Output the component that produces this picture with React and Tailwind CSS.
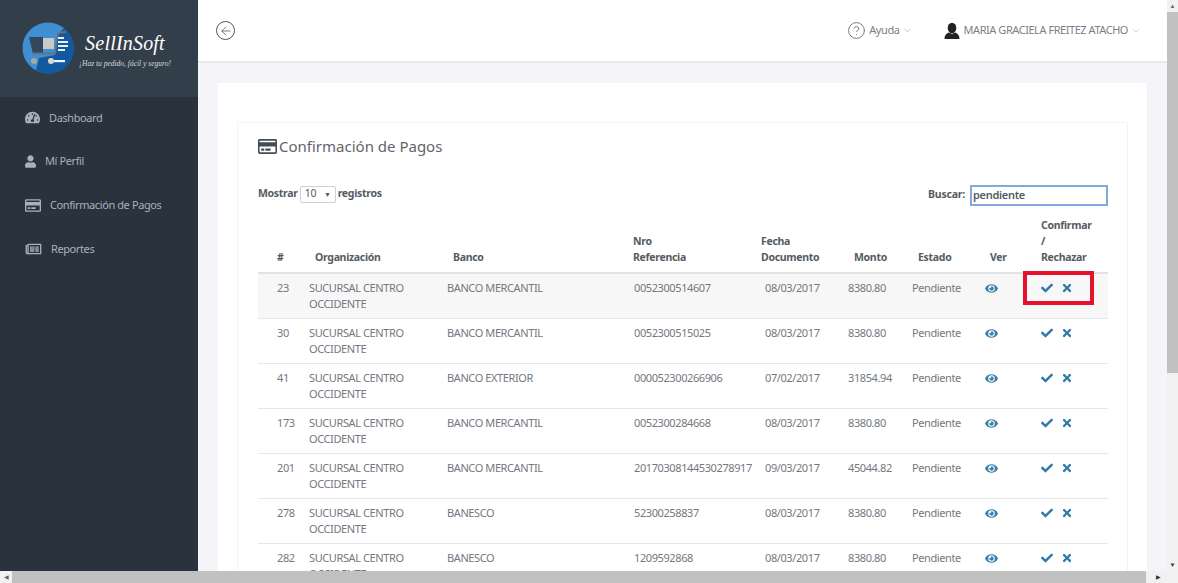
import React from "react";
import { FaTachometerAlt, FaUser, FaRegCreditCard, FaRegNewspaper, FaEye, FaCheck, FaTimes } from "react-icons/fa";
import { ArrowLeft, ChevronDown, HelpCircle } from "lucide-react";

const rows = [
  ["23", "BANCO MERCANTIL", "0052300514607", "08/03/2017", "8380.80"],
  ["30", "BANCO MERCANTIL", "0052300515025", "08/03/2017", "8380.80"],
  ["41", "BANCO EXTERIOR", "000052300266906", "07/02/2017", "31854.94"],
  ["173", "BANCO MERCANTIL", "0052300284668", "08/03/2017", "8380.80"],
  ["201", "BANCO MERCANTIL", "20170308144530278917", "09/03/2017", "45044.82"],
  ["278", "BANESCO", "52300258837", "08/03/2017", "8380.80"],
  ["282", "BANESCO", "1209592868", "08/03/2017", "8380.80"],
];

function Logo() {
  return (
    <svg width="52" height="52" viewBox="0 0 52 52" className="shrink-0">
      <circle cx="26" cy="26" r="25.5" fill="#3f8fd2" />
      <path d="M42 6A25.5 25.5 0 0 1 14 48.500L17 36L33 33L36 12Z" fill="#14589f" />
      <path d="M7 15H21V32H11Z" fill="#33475e" />
      <rect x="21" y="16" width="11" height="11" fill="#c9c9c9" />
      <path d="M11 31.500H33L36 12C37 10 40 10 44 10" fill="none" stroke="#64717f" strokeWidth="1.800" />
      <path d="M36 16H42M36 20H46M36 24H46M36 28H43" stroke="#e8f1f8" strokeWidth="1.800" />
      <circle cx="12" cy="39" r="3" fill="#a8a8a0" />
      <circle cx="29" cy="39" r="3" fill="#d8d8d0" />
      <rect x="32" y="38" width="11" height="2.200" fill="#eef4f9" />
    </svg>
  );
}

function Nav({ icon, label, className }) {
  return (
    <div className="flex items-center h-[43.7px] pl-[25px] text-[11px] tracking-[-0.4px] text-[#a9b1bc]">
      {icon}
      <span className={className}>{label}</span>
    </div>
  );
}

export default function App() {
  return (
    <div className="flex flex-col h-[583px] w-[1178px] overflow-hidden bg-[#f4f4f9] text-[#73787f] font-['Noto_Sans',sans-serif]">
      <div className="flex flex-1 min-h-0">
        <aside className="w-[198px] shrink-0 bg-[#2a323e]">
          <div className="h-[97px] bg-[#333e4b] flex items-center pl-[22px] pb-[1px]">
            <Logo />
            <div className="ml-[3px] w-[96px] text-center text-white font-['Liberation_Serif',serif] italic pt-[4px]">
              <div className="text-[20px] leading-[22px] tracking-[0.2px]">SellInSoft</div>
              <div className="text-[7.5px] leading-[10px] whitespace-nowrap mt-[5px] text-[#d5d9de]">¡Haz tu pedido, fácil y seguro!</div>
            </div>
          </div>
          <nav className="mt-[-1px]">
            <Nav icon={<FaTachometerAlt className="w-[15px] h-[15px]" />} label="Dashboard" className="ml-[9px]" />
            <Nav icon={<FaUser className="w-[11px] h-[13px]" />} label="Mí Perfil" className="ml-[9px]" />
            <Nav icon={<FaRegCreditCard className="w-[16px] h-[15px]" />} label="Confirmación de Pagos" className="ml-[9px]" />
            <Nav icon={<FaRegNewspaper className="w-[17px] h-[14px]" />} label="Reportes" className="ml-[9px]" />
          </nav>
        </aside>

        <main className="flex-1 min-w-0 overflow-hidden">
          <header className="h-[63px] bg-white border-b-2 border-[#e7e7ec] flex items-center pl-[18px] pr-[26px] text-[11px] text-[#7c8085]">
            <span className="relative flex items-center justify-center w-[19px] h-[19px] rounded-full border border-[#555]">
              <ArrowLeft className="w-[14px] h-[14px] text-[#555]" strokeWidth={1.3} />
            </span>
            <HelpCircle className="ml-auto w-[19px] h-[19px] text-[#666]" strokeWidth={1.1} />
            <span className="ml-[3px] tracking-[-0.4px]">Ayuda</span>
            <ChevronDown className="ml-[2px] w-[11px] h-[11px]" strokeWidth={1} />
            <svg width="18" height="18" viewBox="0 0 18 18" className="ml-[30px] text-[#222]">
              <ellipse cx="9" cy="6" rx="4.3" ry="5.2" fill="currentColor" />
              <path d="M1.5 17c0-4 2.5-6 4.5-6.5l3 1.5 3-1.5c2 .5 4.500 2.500 4.500 6.500Z" fill="currentColor" />
            </svg>
            <span className="ml-[3px] whitespace-nowrap tracking-[-0.45px]">MARIA GRACIELA FREITEZ ATACHO</span>
            <ChevronDown className="ml-[3px] w-[10px] h-[10px]" strokeWidth={1} />
          </header>

          <div className="pl-[20px] pr-[20px] pt-[20px]">
            <section className="bg-white pt-[39px] px-[19px] h-[600px]">
              <div className="border border-[#f4f4f6] border-b-0 pl-[20px] pr-[19px] pt-[11px] h-[600px]">
                <h1 className="flex items-center text-[15px] leading-[24px] font-normal text-[#5f656c]">
                  <FaRegCreditCard className="w-[19px] h-[19px] text-[#444c55] mr-[2px]" />
                  Confirmación de Pagos
                </h1>
                <div className="flex items-center justify-between mt-[24px] h-[24px] text-[10.5px] tracking-[-0.3px] font-bold text-[#555b62]">
                  <div className="flex items-center">
                    <span>Mostrar</span>
                    <span className="relative mx-[2px] w-[36px] h-[17px] border border-[#cfcfcf] rounded-[2px] flex items-center pl-[4px] font-normal">
                      10
                      <span className="absolute right-[4px] top-[3px] text-[7px]">▼</span>
                    </span>
                    <span>registros</span>
                  </div>
                  <div className="flex items-center mt-[2px]">
                    <span className="mr-[5px] tracking-[-0.2px]">Buscar:</span>
                    <div className="w-[138px] h-[21px] border-2 border-[#86a8dc] pl-[1px] text-[11px] leading-[16px] font-semibold tracking-[-0.3px]">pendiente</div>
                  </div>
                </div>

                <table className="table-fixed w-[850px] mt-[11px] border-collapse text-[11px] tracking-[-0.4px] leading-[16px]">
                  <colgroup>
                    <col className="w-[43px]" />
                    <col className="w-[138px]" />
                    <col className="w-[187px]" />
                    <col className="w-[131px]" />
                    <col className="w-[83px]" />
                    <col className="w-[64px]" />
                    <col className="w-[73px]" />
                    <col className="w-[56px]" />
                    <col className="w-[75px]" />
                  </colgroup>
                  <thead className="font-bold text-[#555b62] text-[10.5px] tracking-[-0.3px]">
                    <tr className="border-b-2 border-[#e3e3e6] align-bottom">
                      <th className="pl-[19px] pb-[7px] text-left">#</th>
                      <th className="pl-[14px] pb-[7px] text-left">Organización</th>
                      <th className="pl-[14px] pb-[7px] text-left">Banco</th>
                      <th className="pl-[7px] pb-[7px] text-left">Nro<br />Referencia</th>
                      <th className="pl-[4px] pb-[7px] text-left">Fecha<br />Documento</th>
                      <th className="pl-[14px] pb-[7px] text-left">Monto</th>
                      <th className="pl-[14px] pb-[7px] text-left">Estado</th>
                      <th className="pl-[13px] pb-[7px] text-left">Ver</th>
                      <th className="pl-[8px] pb-[7px] text-left">Confirmar<br />/<br />Rechazar</th>
                    </tr>
                  </thead>
                  <tbody>
                    {rows.map((r, i) => (
                      <tr key={r[0]} className={`h-[45px] border-b border-[#e6e6ea] align-top ${i === 0 ? "bg-[#f7f7f7]" : ""}`}>
                        <td className="pl-[19px] pt-[6px]">{r[0]}</td>
                        <td className="pl-[8px] pt-[6px]">SUCURSAL CENTRO<br />OCCIDENTE</td>
                        <td className="pl-[8px] pt-[6px]">{r[1]}</td>
                        <td className="pl-[8px] pt-[6px]">{r[2]}</td>
                        <td className="pl-[8px] pt-[6px]">{r[3]}</td>
                        <td className="pl-[8px] pt-[6px]">{r[4]}</td>
                        <td className="pl-[8px] pt-[6px]">Pendiente</td>
                        <td className="pl-[8px] pt-[8px]"><FaEye className="w-[13px] h-[13px] text-[#3c7fa8]" /></td>
                        <td className="relative pl-[8px] pt-[8px]">
                          <div className="flex items-center gap-[9px] text-[#2f7aa8]">
                            <FaCheck className="w-[12px] h-[12px]" />
                            <FaTimes className="w-[10px] h-[12px]" />
                          </div>
                          {i === 0 && <div className="absolute left-[-10px] top-[-3px] w-[71px] h-[34px] border-[4px] border-[#e4122a]" />}
                        </td>
                      </tr>
                    ))}
                  </tbody>
                </table>
              </div>
            </section>
          </div>
        </main>

        <div className="w-[11px] shrink-0 bg-[#f1f1f1] flex flex-col items-center">
          <span className="h-[12px] text-[6px] leading-[12px] text-[#666]">▲</span>
          <div className="w-full h-[361px] bg-[#c1c1c1]" />
          <span className="mt-auto h-[12px] text-[6px] leading-[12px] text-[#333]">▼</span>
        </div>
      </div>

      <div className="h-[12px] shrink-0 bg-[#f1f1f1] flex items-center">
        <span className="w-[12px] text-center text-[6px] leading-[12px] text-[#666]">◀</span>
        <div className="w-[1134px] h-full bg-[#c1c1c1]" />
        <span className="ml-[6px] w-[12px] text-center text-[6px] leading-[12px] text-[#333]">▶</span>
      </div>
    </div>
  );
}
